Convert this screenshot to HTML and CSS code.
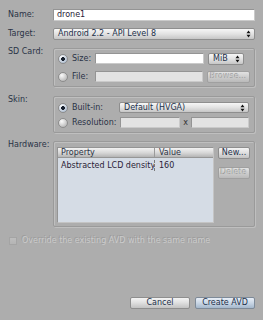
FILE: index.html
```html
<!DOCTYPE html>
<html>
<head>
<meta charset="utf-8">
<link rel="stylesheet" href="styles.css">
</head>
<body>
<div class="dialog">
  <div class="row name-row">
    <div class="label">Name:</div>
    <div class="input wide">drone1</div>
  </div>
  <div class="row target-row">
    <div class="label">Target:</div>
    <div class="combo wide"><span>Android 2.2 - API Level 8</span><svg class="arrow" width="5" height="8" viewBox="0 0 5 8"><path d="M0.5 3.2 L2.5 0.5 L4.5 3.2 Z M0.5 4.8 L2.5 7.5 L4.5 4.8 Z" fill="#111"/></svg></div>
  </div>
  <div class="row group-row sd-row">
    <div class="label top">SD Card:</div>
    <div class="group sd">
      <div class="grow">
        <div class="opt sdopt"><span class="radio on"></span><span>Size:</span></div>
        <div class="input sdin"></div>
        <div class="combo mib"><span>MiB</span><svg class="arrow" width="5" height="8" viewBox="0 0 5 8"><path d="M0.5 3.2 L2.5 0.5 L4.5 3.2 Z M0.5 4.8 L2.5 7.5 L4.5 4.8 Z" fill="#111"/></svg></div>
      </div>
      <div class="grow">
        <div class="opt sdopt"><span class="radio"></span><span>File:</span></div>
        <div class="input sdin disabled"></div>
        <div class="btn small disabled-btn browse">Browse...</div>
      </div>
    </div>
  </div>
  <div class="row group-row skin-row">
    <div class="label top">Skin:</div>
    <div class="group skin">
      <div class="grow">
        <div class="opt skinopt"><span class="radio on"></span><span>Built-in:</span></div>
        <div class="combo skincombo"><span>Default (HVGA)</span><svg class="arrow" width="5" height="8" viewBox="0 0 5 8"><path d="M0.5 3.2 L2.5 0.5 L4.5 3.2 Z M0.5 4.8 L2.5 7.5 L4.5 4.8 Z" fill="#111"/></svg></div>
      </div>
      <div class="grow res">
        <div class="opt skinopt"><span class="radio"></span><span>Resolution:</span></div>
        <div class="input disabled resw"></div>
        <div class="xsep">x</div>
        <div class="input disabled resh"></div>
      </div>
    </div>
  </div>
  <div class="row group-row hw-row">
    <div class="label top">Hardware:</div>
    <div class="group hw">
      <div class="table">
        <div class="thead">
          <div class="c1">Property</div>
          <div class="c2">Value</div>
        </div>
        <div class="trow">
          <div class="c1">Abstracted LCD density</div>
          <div class="c2">160</div>
        </div>
      </div>
      <div class="hwbtns">
        <div class="btn small">New...</div>
        <div class="btn small disabled-btn">Delete</div>
      </div>
    </div>
  </div>
  <div class="check-row">
    <span class="checkbox"></span>
    <span class="disabled-text">Override the existing AVD with the same name</span>
  </div>
  <div class="actions">
    <div class="btn action">Cancel</div>
    <div class="btn action primary">Create AVD</div>
  </div>
</div>
</body>
</html>
```
FILE: styles.css
```css
* { box-sizing: border-box; }
html, body { margin: 0; padding: 0; }
body {
  background: #adadad;
  font-family: "DejaVu Sans", Verdana, sans-serif;
  font-size: 8px;
  color: #2a3346;
  width: 263px;
  height: 320px;
  overflow: hidden;
}
.dialog {
  height: 320px;
  padding: 9px 8px 11px 8px;
  display: flex;
  flex-direction: column;
}
.row { display: flex; align-items: center; }
.label { width: 45px; flex: none; line-height: 10px; color: #2a3346; }
.label.top { align-self: flex-start; margin-top: -1px; }
.group-row { align-items: flex-start; }
.wide { width: 202px; }
.input {
  height: 12px;
  background: #fff;
  border: 1px solid #949494;
  border-right-color: #cacaca;
  border-bottom-color: #cacaca;
  padding: 0 3px;
  line-height: 10px;
  color: #2a2236;
}
.input.disabled { background: #e3e3e3; }
.combo {
  height: 12px;
  border: 1px solid #8e8e8e;
  border-radius: 2px;
  background: linear-gradient(#f6f6f6, #e2e2e2 50%, #c6c6c6);
  display: flex;
  align-items: center;
  justify-content: space-between;
  padding: 0 3px 0 4px;
  line-height: 10px;
  color: #22304a;
}
.arrow { flex: none; }
.name-row { height: 12px; }
.target-row { margin-top: 7px; height: 12px; }
.sd-row { margin-top: 8px; }
.group {
  border: 1px solid #9a9a9a;
  box-shadow: inset 1px 1px 0 #bfbfbf, 1px 1px 0 #bfbfbf;
  border-radius: 2px;
  display: flex;
  flex-direction: column;
}
.grow { display: flex; align-items: center; height: 11px; }
.opt { display: flex; align-items: center; gap: 4px; flex: none; color: #2a3346; }
.radio {
  width: 10px; height: 10px; border-radius: 50%;
  border: 1px solid #8c8c8c;
  background: radial-gradient(circle at 35% 30%, #fbfbfb, #bcbcbc 75%);
  flex: none;
}
.radio.on {
  background: radial-gradient(circle, #17202e 0 1.6px, transparent 2.2px),
              radial-gradient(circle at 35% 30%, #ffffff, #aebdd0 80%);
}
.sd { width: 202px; height: 39px; padding: 4px 4px 0 4px; }
.sd .grow + .grow { margin-top: 7px; }
.sdopt { width: 37px; }
.sdin { width: 109px; height: 11px; }
.mib { width: 36px; height: 12px; margin-left: 4px; }
.btn {
  border: 1px solid #8e8e8e;
  border-radius: 2px;
  background: linear-gradient(#f4f4f4, #dedede 50%, #c2c2c2);
  display: flex; align-items: center; justify-content: center;
  color: #22304a;
  line-height: 10px;
}
.btn.small { height: 12px; }
.browse { width: 43px; margin-left: 4px; }
.disabled-btn { color: #c8c8c8; text-shadow: -1px -1px 0 #9c9c9c; background: linear-gradient(#e2e2e2, #cdcdcd 50%, #bababa); border-color: #a0a0a0; }
.skin-row { margin-top: 9px; }
.skin { width: 202px; height: 37px; padding: 5px 5px 0 4px; }
.skin .res { margin-top: 4px; }
.skinopt { width: 61px; }
.skincombo { width: 131px; height: 11px; }
.resw { width: 60px; height: 11px; margin-left: 1px; }
.xsep { width: 12px; text-align: center; color: #333; }
.resh { width: 58px; height: 11px; }
.hw-row { margin-top: 8px; }
.hw { width: 202px; height: 86px; padding: 5px 4px 0 3px; flex-direction: row; gap: 4px; }
.table {
  width: 157px; height: 76px;
  background: #d5dce5;
  border: 1px solid #949494;
  border-right-color: #c4c4c4;
  border-bottom-color: #c4c4c4;
}
.thead {
  display: flex; height: 10px;
  background: linear-gradient(#f2f2f2, #d6d6d6 55%, #b4b4b4);
  border-bottom: 1px solid #969696;
  line-height: 9px;
  color: #2a3346;
}
.thead .c1 { width: 97px; padding-left: 3px; border-right: 1px solid #9a9a9a; }
.thead .c2 { padding-left: 4px; }
.trow { display: flex; height: 14px; align-items: center; color: #2a2236; }
.trow .c1 { width: 97px; padding-left: 3px; border-right: 1px dashed #7a7a7a; height: 11px; line-height: 11px; white-space: nowrap; overflow: hidden; }
.trow .c2 { padding-left: 4px; }
.hwbtns { display: flex; flex-direction: column; gap: 8px; width: 32px; }
.hwbtns .btn { height: 12px; }
.check-row { display: flex; align-items: center; gap: 5px; margin-top: 9px; padding-left: 1px; height: 9px; }
.checkbox {
  width: 8px; height: 8px; flex: none;
  border: 1px solid #a4a4a4;
  background: linear-gradient(#bdbdbd, #b4b4b4);
}
.disabled-text { color: #cbcbcb; text-shadow: -1px -1px 0 #9c9c9c; white-space: nowrap; }
.actions { margin-top: auto; display: flex; justify-content: flex-end; gap: 5px; }
.btn.action { width: 60px; height: 12px; }
.btn.primary { background: linear-gradient(#e8eef6, #c9d6e5 50%, #a5b8cc); border-color: #7e8a98; }
```
